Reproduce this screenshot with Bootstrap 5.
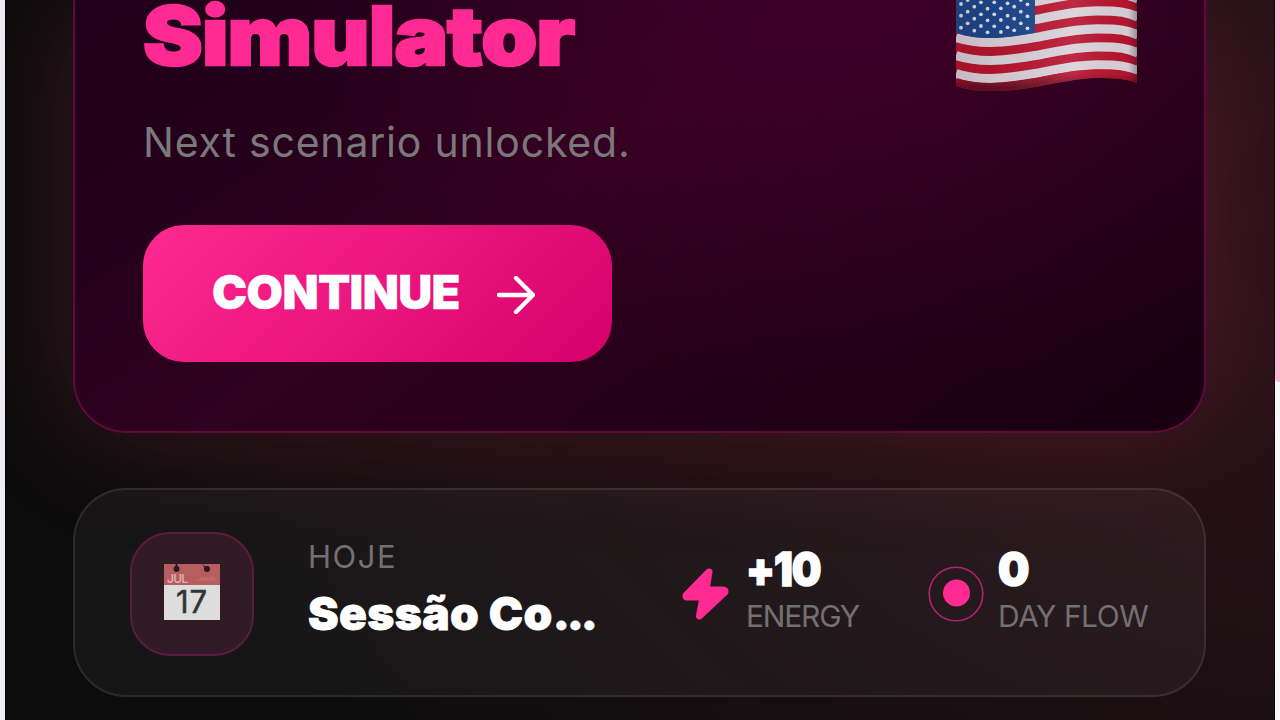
<!DOCTYPE html>
<html lang="pt-BR">
<head>
<meta charset="utf-8">
<meta name="viewport" content="width=device-width, initial-scale=1">
<title>Simulator</title>
<link href="https://cdn.jsdelivr.net/npm/bootstrap@5.3.0/dist/css/bootstrap.min.css" rel="stylesheet">
<style>
body{font-family:Inter,"Open Sans",sans-serif;background:#f8f8fb;height:720px}
.edge-left{width:4.5px;background:#eaedf2}
.edge-right{width:5px}
.edge-right div{height:382px;background:#ffb5d8;border-bottom-left-radius:4px}
.screen{width:1270.5px;height:720px;padding:0 68px 0 67.5px;border:solid #030203;border-width:0 1px;
background:radial-gradient(ellipse 1250px 950px at 108% 30%,rgba(255,60,110,.14),rgba(255,40,110,0) 100%),#0c0c0c}
.hero{height:433px;padding:0 67px 0 68px;border:2px solid #5f093f;border-top:0;border-radius:0 0 53px 53px;
background:radial-gradient(ellipse 560px 400px at 70% -2%,rgba(80,0,50,.5),rgba(70,0,45,0) 100%),linear-gradient(145deg,#20001a 0%,#22001a 15%,#30001f 43%,#240018 68%,#180010 100%);
box-shadow:0 4px 120px rgba(255,60,110,.19)}
.hero h1{font-size:81px;line-height:72px;font-weight:900;letter-spacing:-.8px;color:#ff2a93;-webkit-text-stroke:2.5px #ff2a93;margin:0 0 45px;white-space:nowrap;transform:scaleX(1.108);transform-origin:left}
.hero p{font-size:41px;line-height:48px;color:#7a7879;margin:0 0 59px;padding-top:1px;white-space:nowrap;letter-spacing:.8px}
.go{width:469px;height:137px;border:0;border-radius:41px;padding:0 0 3px 69px;background:linear-gradient(135deg,#ff2a8f,#d6006c);font-size:47px;font-weight:900;letter-spacing:-.6px;-webkit-text-stroke:.5px #fff}
.go svg{margin-top:5px}
.go span{width:285px;text-align:left}
.today{margin-top:55px;height:209px;border:2px solid rgba(255,255,255,.09);border-radius:53px;background:rgba(255,255,255,.045)}
.cal{width:124px;height:124px;margin:2px 0 0 55px;border:2px solid #5c1b41;border-radius:40px;background:#301a24}
.tag{font-size:31px;line-height:38px;color:#737072}
.name{font-size:46px;line-height:54px;font-weight:900;color:#fff;letter-spacing:.4px;-webkit-text-stroke:.8px #fff}
.name span{letter-spacing:-3.2px}
.num{font-size:47px;line-height:50px;font-weight:900;color:#fff;-webkit-text-stroke:1.5px #fff}
#session{width:290px;margin-left:54px;margin-top:-7px}
#session .tag{letter-spacing:1.5px;margin-bottom:10px}
#session .name,#energy,#flow{white-space:nowrap}
#bolt{margin-left:84px;margin-top:2px}
#energy{width:114px;margin-left:16px;margin-top:-6px}
#energy .num,#flow .num{margin-bottom:3px}
#energy .tag,#flow .tag{font-size:30px}
#dot{margin-left:68px;margin-top:2px}
#flow{margin-left:14px;margin-top:-6px}
#energy .tag{letter-spacing:-1.2px}
#flow .tag{letter-spacing:-.5px}
#energy .num{letter-spacing:-1.2px;transform:scaleX(.89);transform-origin:left}
#flow .num{transform:scaleX(.94);transform-origin:left}
</style>
</head>
<body class="d-flex overflow-hidden">
<div class="edge-left flex-shrink-0"></div>
<main class="screen flex-shrink-0">
  <section class="hero d-flex justify-content-between">
    <div>
      <h1>Simulator</h1>
      <p>Next scenario unlocked.</p>
      <button class="go btn btn-primary d-flex align-items-center"><span>CONTINUE</span>
        <svg width="38" height="38" fill="none" stroke="#fff" stroke-width="4.300" stroke-linecap="round" stroke-linejoin="round"><path d="M2 19H36M19 2L36 19L19 36"/></svg>
      </button>
    </div>
    <svg id="flag" width="181" height="94" viewBox="956 1 181 94">
      <defs>
        <path id="wave" d="M956 0C968 4 978 5 990 5S1018 3 1035 0S1074-8.7 1097-8.7S1128-7 1138-2.500"/>
        <linearGradient id="shade"><stop offset="0" stop-color="#300" stop-opacity=".12"/><stop offset=".2" stop-opacity=".06"/><stop offset=".65" stop-color="#fff" stop-opacity=".09"/><stop offset=".95" stop-opacity=".03"/><stop offset="1" stop-opacity=".3"/></linearGradient>
        <linearGradient id="hem" x2="0" y2="1"><stop offset="0" stop-color="#b8152f"/><stop offset="1" stop-color="#641024"/></linearGradient>
        <clipPath id="cloth"><path d="M956 0H1137V84C1128 80 1115 79 1097 79S1052 85 1035 88S1002 92 990 92S968 91 956 87Z"/></clipPath>
      </defs>
      <g clip-path="url(#cloth)">
      <path fill="#b8152f" d="M956 0H1137V94H956Z"/>
      <g fill="none" stroke-width="9.200">
        <g stroke="#dad2da"><use href="#wave" y="2.5"/><use href="#wave" y="20.5"/><use href="#wave" y="38.5"/><use href="#wave" y="56.5"/><use href="#wave" y="74.5"/></g>
        <use href="#wave" y="83.5" stroke="url(#hem)"/>
      </g>
      <path fill="#1d478c" d="M956 0H1035V34C1018 37 1002 39 990 39S968 38 956 34Z"/>
      <g id="stars" fill="#d9dde8"></g>
      <path fill="url(#shade)" d="M956 0H1137V94H956Z"/>
      </g>
    </svg>
  </section>
  <section class="today d-flex align-items-center">
    <div class="cal d-flex align-items-center justify-content-center flex-shrink-0">
      <svg width="56" height="56" style="margin-top:-4px"><path fill="#dedcdd" d="M0 0H56V56H0Z"/><path fill="#b55d5f" d="M0 0H56V21H0Z"/><g fill="#291820"><circle cx="12.5" cy="5" r="3"/><circle cx="43" cy="5" r="3"/><path d="M11.500 0h2v5h-2zM38 0l5 4-1 2z"/></g><path d="M31 17q9-6 13-3 5-4 8 1v2z" fill="#c1696a"/><text x="3" y="18.500" font-size="12" font-weight="600" fill="#dcaeb0" textLength="21">JUL</text><text x="12" y="49" font-size="31" fill="#333" stroke="#333" stroke-width=".5" textLength="31">17</text></svg>
    </div>
    <div id="session"><div class="tag">HOJE</div><div class="name">Sessão Co<span>...</span></div></div>
    <svg id="bolt" class="flex-shrink-0" width="48" height="52" fill="#ff2a93" stroke="#ff2a93" stroke-width="7" stroke-linejoin="round"><path d="M27 4L4 27.500Q4 29 5 29H21L17.500 48L43 24Q43.500 22 41 22H24Z"/></svg>
    <div id="energy"><div class="num">+10</div><div class="tag">ENERGY</div></div>
    <svg id="dot" class="flex-shrink-0" width="56" height="56"><circle cx="28" cy="28" r="26.800" fill="none" stroke="#b02270" stroke-width="1.600"/><circle cx="28.500" cy="27" r="13.500" fill="#ff2a93"/></svg>
    <div id="flow"><div class="num">0</div><div class="tag">DAY FLOW</div></div>
  </section>
</main>
<div class="edge-right flex-shrink-0"><div></div></div>
<script>
const columns=[[83,47,12],[70,35,0],[92,56,20],[78,43,7],[97,61,26],[79,43,7],[96,60,25],[82,47,10],[91,56,20],[70,35,0],[85,49,13]];
document.getElementById('stars').innerHTML=columns.map((c,i)=>c.map(y=>`<circle cx="${961+i*6.65}" cy="${y/3+1}" r="1.9"/>`).join('')).join('');
</script>
<script src="https://cdn.jsdelivr.net/npm/bootstrap@5.3.0/dist/js/bootstrap.bundle.min.js"></script>
</body>
</html>
